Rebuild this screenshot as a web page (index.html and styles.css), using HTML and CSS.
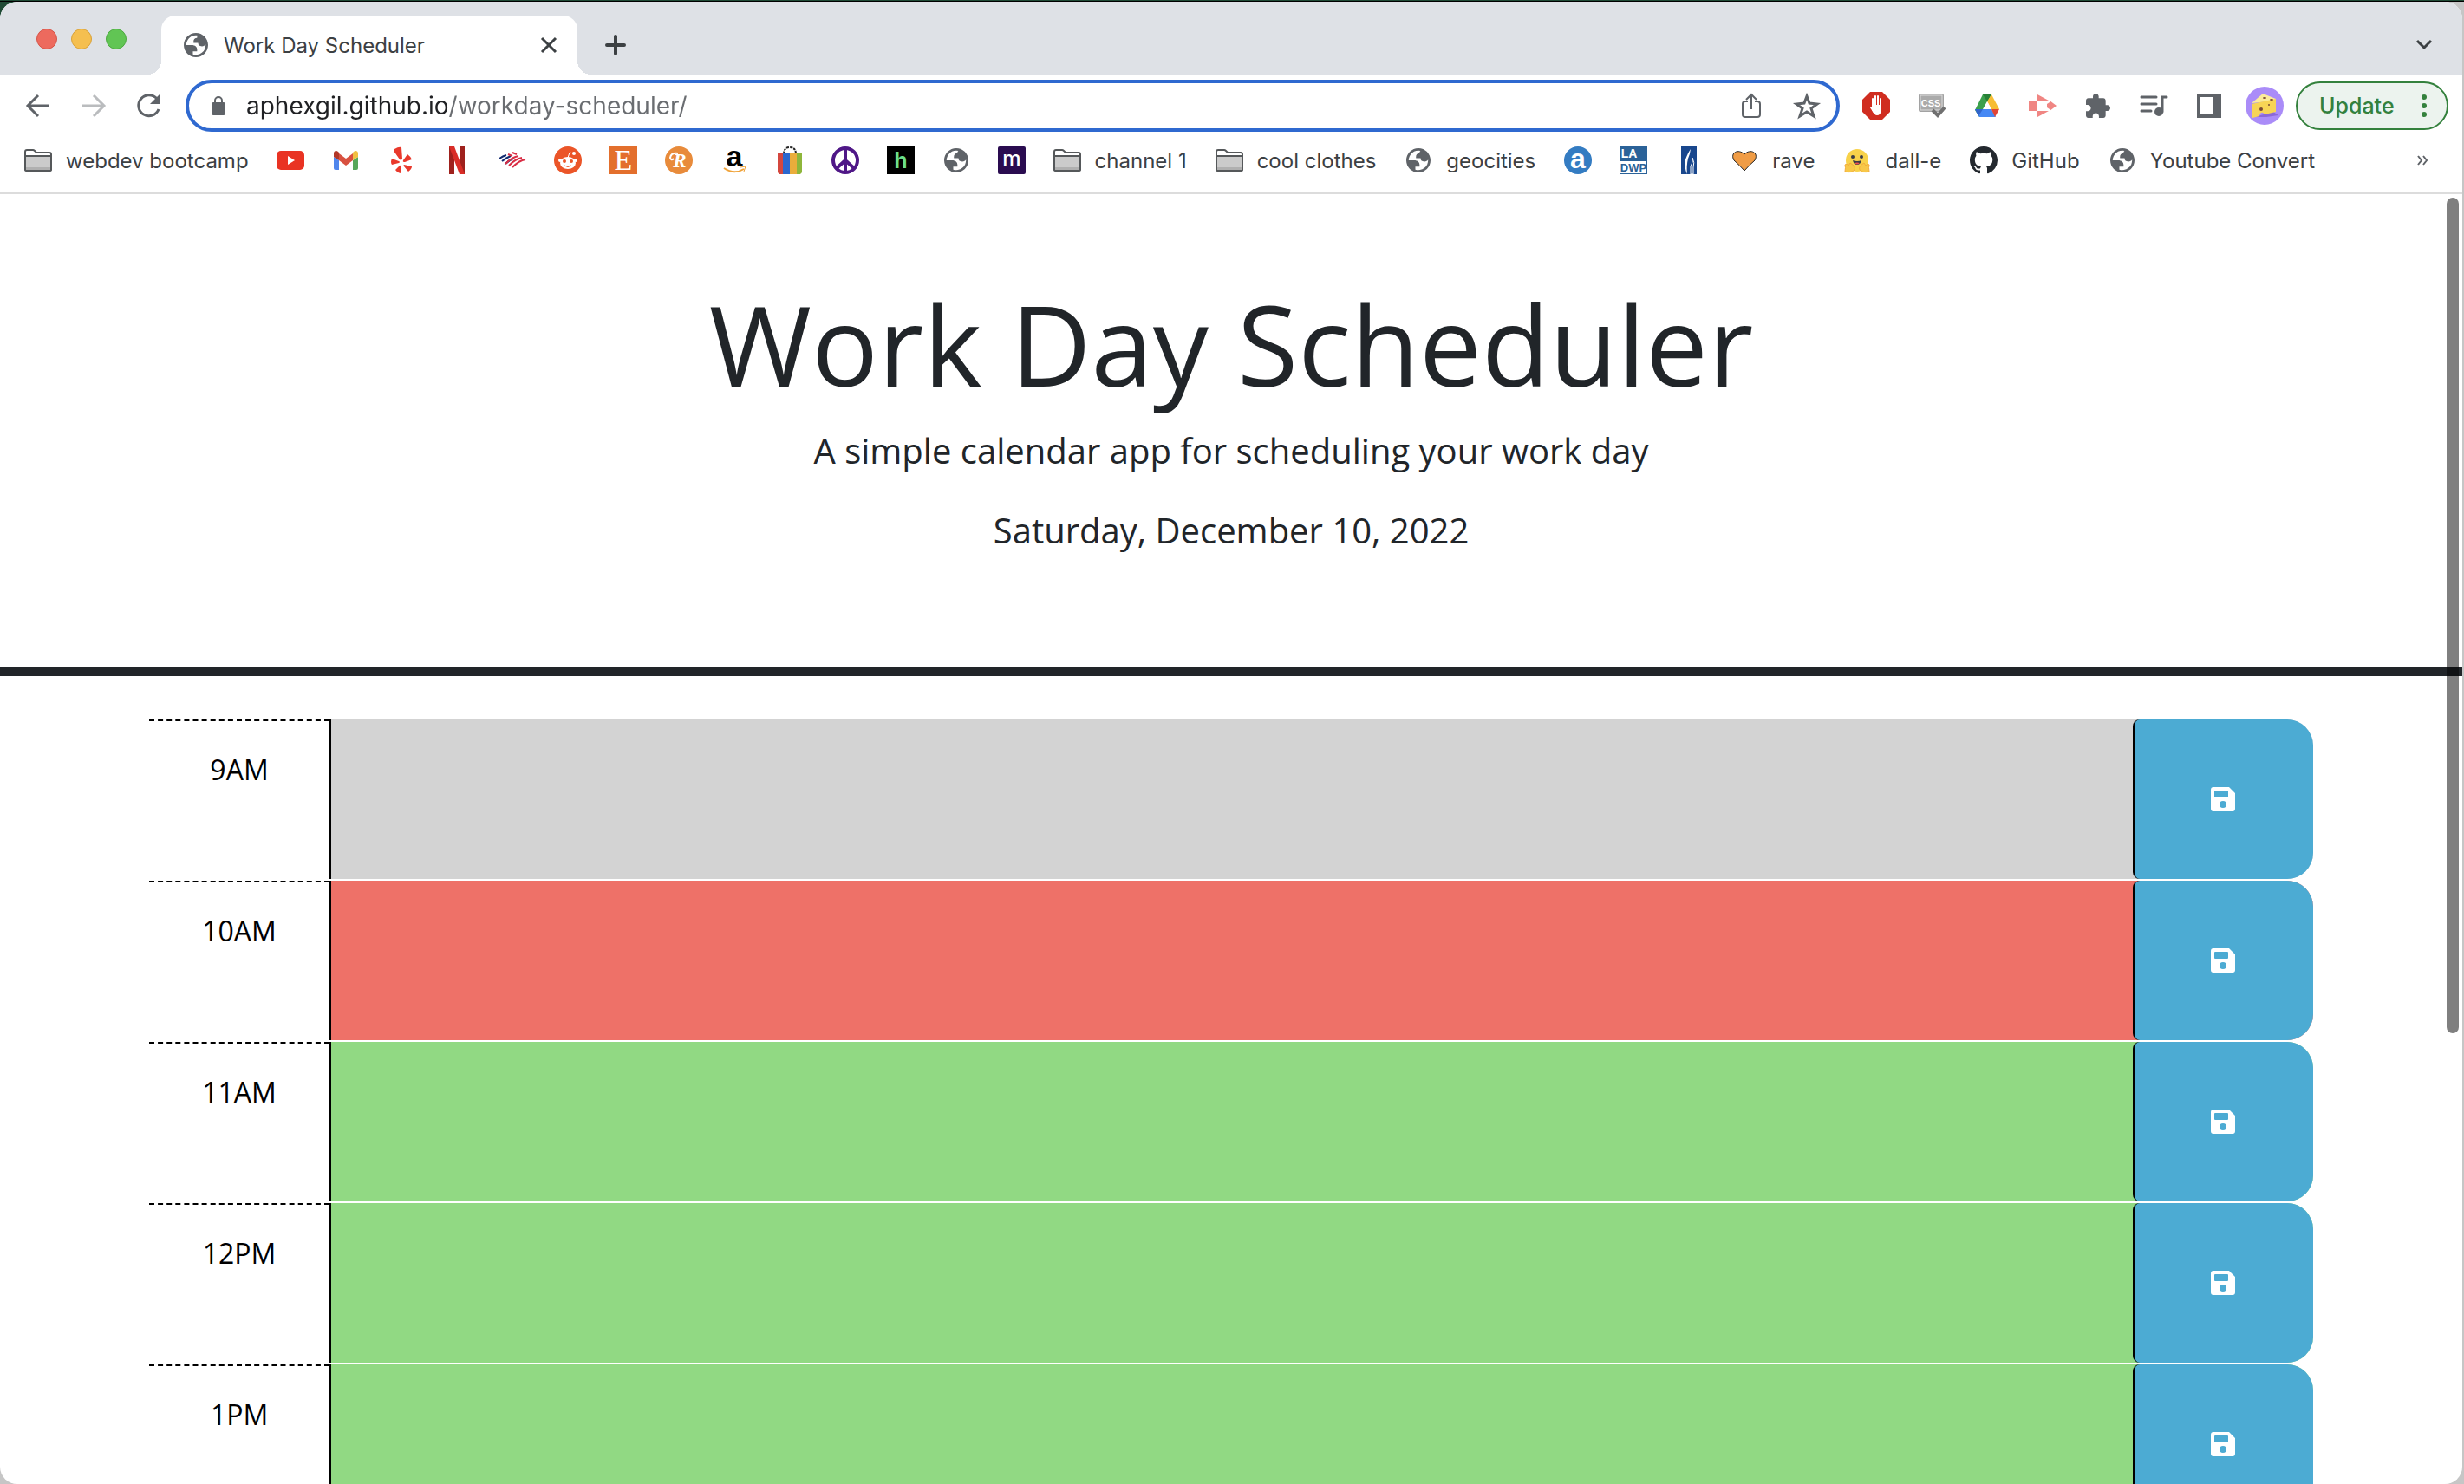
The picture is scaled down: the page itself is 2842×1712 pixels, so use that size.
FILE: index.html
```html
<!DOCTYPE html>
<html lang="en">
<head>
<meta charset="utf-8">
<meta name="viewport" content="width=device-width, initial-scale=1">
<title>Work Day Scheduler</title>
<link rel="stylesheet" href="styles.css">
</head>
<body>
<svg class="sprite" aria-hidden="true">
  <symbol id="globe" viewBox="2 2 20 20"><path fill="#5f6368" fill-rule="evenodd" d="M12 2C6.48 2 2 6.48 2 12s4.48 10 10 10 10-4.48 10-10S17.52 2 12 2zM4 12h4.4c3.407.022 4.922 1.73 4.543 5.127H9.488v2.47a8.004 8.004 0 0 0 10.498-8.083C19.327 12.504 18.332 13 17 13c-2.137 0-3.206-.916-3.206-2.75h-3.748c-.274-2.728.683-4.092 2.87-4.092 0-.975.327-1.597.811-1.97A8.004 8.004 0 0 0 4 12z"/></symbol>
  <symbol id="folder" viewBox="0 0 32 32"><path d="M1 27V6q0-2 2-2h7q1 0 2 1l2 2h15q2 0 2 2v18q0 1-2 1H3q-2 0-2-1z" fill="#fff" stroke="#55585a" stroke-width="2"/><path d="M2 12h28v15H2z" fill="#cbcbcb"/><path d="M2 24h28v3H2z" fill="#b0b0b0"/><path d="M1 11h30" stroke="#55585a" stroke-width="2"/></symbol>
  <symbol id="save" viewBox="0 0 28 28"><path fill="#fff" fill-rule="evenodd" d="M3 0h18l7 7v18q0 3-3 3H3q-3 0-3-3V3q0-3 3-3zM5 4q-1 0-1 1v6q0 1 1 1h14q1 0 1-1V5q0-1-1-1zM14 16a4 4 0 1 0 0 8 4 4 0 0 0 0-8z"/></symbol>
</svg>

<div class="window">
  <header class="tabstrip">
    <div class="lights"><button class="light red" aria-label="Close window"></button><button class="light yellow" aria-label="Minimize"></button><button class="light green" aria-label="Zoom"></button></div>
    <div class="tab">
      <svg class="icon28"><use href="#globe"/></svg>
      <span class="tab-title">Work Day Scheduler</span>
      <button class="plain tab-close" aria-label="Close tab"><svg width="18" height="18" viewBox="0 0 18 18" stroke="#3c4043" stroke-width="3"><path d="M1 1l16 16M17 1L1 17"/></svg></button>
    </div>
    <button class="plain new-tab" aria-label="New tab"><svg width="24" height="24" viewBox="0 0 24 24" stroke="#3c4043" stroke-width="4" stroke-linecap="round"><path d="M12 2v20M2 12h20"/></svg></button>
    <button class="plain tab-menu" aria-label="Search tabs"><svg width="18" height="12" viewBox="0 0 18 12" fill="none" stroke="#3c4043" stroke-width="3"><path d="M1 1l8 8 8-8"/></svg></button>
  </header>

  <nav class="toolbar" aria-label="Navigation">
    <button class="plain tool" aria-label="Back"><svg width="28" height="28" viewBox="0 0 28 28" fill="none" stroke="#5f6368" stroke-width="3"><path d="M27 14H3M14 2L2 14l12 12"/></svg></button>
    <button class="plain tool" aria-label="Forward" disabled><svg width="28" height="28" viewBox="0 0 28 28" fill="none" stroke="#babcbe" stroke-width="3"><path d="M1 14h24M14 2l12 12-12 12"/></svg></button>
    <button class="plain tool" aria-label="Reload"><svg width="28" height="28" viewBox="0 0 28 28"><path d="M23 6A12 12 0 1 0 25 18" fill="none" stroke="#5f6368" stroke-width="3"/><path d="M27 0v12H15z" fill="#5f6368"/></svg></button>
    <form class="omnibox">
      <svg width="18" height="24" viewBox="0 0 18 24"><rect x="1" y="8" width="16" height="15" rx="2" fill="#5f6368"/><path d="M5 9V6a4 4 0 0 1 8 0v3" fill="none" stroke="#5f6368" stroke-width="2"/></svg>
      <input class="address" type="text" aria-label="Address" value="aphexgil.github.io/workday-scheduler/" spellcheck="false">
      <button type="button" class="plain tool" aria-label="Share"><svg width="24" height="30" viewBox="0 0 24 30" fill="none" stroke="#5f6368" stroke-width="2"><path d="M8 10H5q-3 0-3 3v12q0 3 3 3h14q3 0 3-3V13q0-3-3-3h-3M12 19V3M6 8l6-6 6 6"/></svg></button>
      <button type="button" class="plain tool" aria-label="Bookmark"><svg width="28" height="28" viewBox="0 0 28 28" fill="none" stroke="#5f6368" stroke-width="3"><path d="M14 3l3 8 9 1-7 5 3 9-8-5-8 5 3-9-7-5 9-1z"/></svg></button>
    </form>
    <div class="extensions">
      <button class="plain tool" aria-label="Ad blocker"><svg width="32" height="32" viewBox="0 0 32 32"><path d="M9 0h14l9 9v14l-9 9H9l-9-9V9z" fill="#d02d20"/><path d="M12 18V8M15 16V5M18 16V5M21 18V8M14 24l-4-6" stroke="#fff" stroke-width="2" stroke-linecap="round"/><path d="M11 15h11v6q-1 6-5 6-3 0-6-6z" fill="#fff"/></svg></button>
      <button class="plain tool" aria-label="CSS viewer"><svg width="32" height="28" viewBox="0 0 32 28"><rect x="2" y="1" width="27" height="19" rx="1" fill="#aaa" stroke="#a2a2a2" stroke-width="2"/><rect x="3" y="2" width="25" height="17" fill="none" stroke="#ddd"/><text class="mark" x="15" y="15" font-size="11" fill="#fff">CSS</text><path d="M17 19l6 6 8-9" fill="none" stroke="#707070" stroke-width="4"/></svg></button>
      <button class="plain tool" aria-label="Drive"><svg width="30" height="26" viewBox="0 0 30 26"><path d="M10 0h10l-5 9-9 17-5-8z" fill="#3ba04d"/><path d="M10 0h10l-5 8z" fill="#278037"/><path d="M20 0l9 17H20L15 8z" fill="#f7bd35"/><path d="M1 17h19l5 9H6z" fill="#4688f4"/><path d="M20 17h9l-5 9z" fill="#e04537"/><path d="M1 17h9l-5 8z" fill="#3165ca"/><path d="M15 8l5 9H10z" fill="#fff"/></svg></button>
      <button class="plain tool" aria-label="Screen recorder"><svg width="32" height="26" viewBox="0 0 32 26"><path d="M0 7h9v12H0zM10 0l13 7H10zM10 19h13l-13 7zM24 7l8 6-8 6v-2l-3-2v-4l3-2z" fill="#f08683"/></svg></button>
      <button class="plain tool" aria-label="Extensions"><svg width="28" height="28" viewBox="2 1 21 21"><path fill="#5f6368" d="M20.500 11H19V7c0-1.100-.900-2-2-2h-4V3.500C13 2.120 11.880 1 10.500 1S8 2.120 8 3.500V5H4c-1.100 0-1.990.900-1.990 2v3.800H3.500c1.490 0 2.700 1.210 2.700 2.700s-1.210 2.700-2.700 2.700H2V20c0 1.100.900 2 2 2h3.800v-1.500c0-1.490 1.210-2.700 2.700-2.700s2.700 1.210 2.700 2.700V22H17c1.100 0 2-.900 2-2v-4h1.500c1.380 0 2.500-1.120 2.500-2.500S21.880 11 20.500 11z"/></svg></button>
      <button class="plain tool" aria-label="Media"><svg width="32" height="26" viewBox="0 0 32 26" fill="none" stroke="#5f6368" stroke-width="3" stroke-linecap="round"><path d="M2 3h17M2 11h17M2 19h11M31 3h-5v17"/><circle cx="22" cy="20" r="5" fill="#5f6368" stroke="none"/></svg></button>
      <button class="plain tool" aria-label="Side panel"><svg width="28" height="28" viewBox="0 0 28 28"><path fill="#5f6368" fill-rule="evenodd" d="M0 0h28v28H0zM4 4v20h14V4z"/></svg></button>
      <button class="plain tool" aria-label="Profile"><svg width="44" height="44" viewBox="0 0 44 44"><circle cx="22" cy="22" r="22" fill="#aa8cf8"/><path d="M10 35h14l14-2-6-4z" fill="#8b68d8"/><path d="M7 19l13-11 15 6v2z" fill="#fbeb9b"/><path d="M7 20l28-6v15l-13 3q-2-3-4-2t-2 4l-8 2z" fill="#f7d455"/><g fill="#7a4a33"><ellipse cx="22" cy="13" rx="2" ry="1"/><ellipse cx="30" cy="15" rx="2" ry="1"/><circle cx="18" cy="26" r="2"/><circle cx="27" cy="21" r="1"/></g></svg></button>
    </div>
    <button class="update">Update<svg width="6" height="26" viewBox="0 0 6 26" fill="#34813d"><circle cx="3" cy="3" r="3"/><circle cx="3" cy="13" r="3"/><circle cx="3" cy="23" r="3"/></svg></button>
  </nav>

  <nav class="bookmarks" aria-label="Bookmarks">
    <a href="#"><svg class="icon32"><use href="#folder"/></svg>webdev bootcamp</a>
    <a href="#" aria-label="YouTube"><svg class="icon32" viewBox="0 0 32 32"><rect y="5" width="32" height="22" rx="5" fill="#e93323"/><path d="M13 11l8 5-8 5z" fill="#fff"/></svg></a>
    <a href="#" aria-label="Gmail"><svg class="icon32" viewBox="0 0 32 32"><path d="M2 12l6 4v11H4q-2 0-2-2z" fill="#5086ec"/><path d="M24 16l6-4v13q0 2-2 2h-4z" fill="#57a75a"/><path d="M8 8l8 6 8-6v8l-8 6-8-6z" fill="#d85140"/><path d="M2 12V8c0-3 3-4 5-2l1 1v9z" fill="#b23728"/><path d="M30 12V8c0-3-3-4-5-2l-1 1v9z" fill="#f1bf42"/></svg></a>
    <a href="#" aria-label="Yelp"><svg class="icon32" viewBox="0 0 32 32" fill="#e9392c"><path d="M8 3q5-3 8-2l1 13q-1 3-3 1L7 5zM5 14l8 3q2 1 0 2l-8 2q-2-3 0-7zM9 27l5-5q2-1 2 1v8q-4 0-7-4zM19 21l9 2q0 3-4 6l-5-6q-1-2 0-2zM18 16l5-7q3 2 5 6l-8 3q-3 0-2-2z"/></svg></a>
    <a href="#" aria-label="Netflix"><svg class="icon32" viewBox="0 0 32 32"><path d="M7 0h6v32H7zM19 0h6v32h-6z" fill="#9f211d"/><path d="M7 0h6l12 32h-6z" fill="#d92d27"/></svg></a>
    <a href="#" aria-label="Bank of America"><svg class="icon32" viewBox="0 0 32 32"><path d="M1 14q4-3 8-4M4 17q5-4 10-6M8 20q4-4 9-6" fill="none" stroke="#142c71" stroke-width="2"/><path d="M11 9l5 2M16 7l5 2" stroke="#d92e45" stroke-width="2"/><path d="M8 20q8-8 15-9M12 22q8-8 15-9M16 24q8-8 15-9" fill="none" stroke="#d92e45" stroke-width="2"/></svg></a>
    <a href="#" aria-label="Reddit"><svg class="icon32" viewBox="0 0 32 32"><circle cx="16" cy="16" r="16" fill="#eb5528"/><g fill="#fff"><ellipse cx="16" cy="19" rx="9" ry="7"/><circle cx="7" cy="16" r="2"/><circle cx="25" cy="16" r="2"/><circle cx="23" cy="8" r="2"/></g><path d="M16 13l2-6 5 1" fill="none" stroke="#fff"/><circle cx="12" cy="17" r="2" fill="#eb5528"/><circle cx="20" cy="17" r="2" fill="#eb5528"/><path d="M12 22q4 3 8 0" fill="none" stroke="#eb5528" stroke-width="1"/></svg></a>
    <a href="#" aria-label="Etsy"><svg class="icon32" viewBox="0 0 32 32"><path d="M0 0h32v32H0z" fill="#e36f2d"/><text class="mark serif" x="16" y="27" font-size="34" fill="#fff">E</text></svg></a>
    <a href="#" aria-label="Rover"><svg class="icon32" viewBox="0 0 32 32"><circle cx="16" cy="16" r="16" fill="#e88b3b"/><text class="mark script" x="17" y="24" font-size="23" fill="#fff">R</text><path d="M15 8Q7 7 6 13q1 4 4 1" fill="none" stroke="#fff" stroke-width="2"/></svg></a>
    <a href="#" aria-label="Amazon"><svg class="icon32" viewBox="0 0 32 32"><text class="mark" x="16" y="23" font-size="34" fill="#000">a</text><path d="M4 25q12 8 23 1" fill="none" stroke="#f0a33a" stroke-width="2"/><path d="M23 24l6-1-2 6" fill="none" stroke="#f0a33a"/></svg></a>
    <a href="#" aria-label="Shopping"><svg class="icon32" viewBox="0 0 32 32"><path d="M9 9q0-8 7-8t7 8" fill="none" stroke="#222" stroke-width="2" stroke-dasharray="3 1"/><path d="M2 8h6v24H4l-2-2z" fill="#d4473e"/><path d="M8 8h8v24H8z" fill="#2b67ce"/><path d="M16 8h8v24h-8z" fill="#eaad3b"/><path d="M24 8h6v22l-2 2h-4z" fill="#8eb63b"/></svg></a>
    <a href="#" aria-label="Peace"><svg class="icon32" viewBox="0 0 32 32" fill="none" stroke="#4f1787" stroke-width="4"><circle cx="16" cy="16" r="14"/><path d="M16 2v28M16 16L6 25M16 16l10 9"/></svg></a>
    <a href="#" aria-label="Hulu"><svg class="icon32" viewBox="0 0 32 32"><path d="M0 0h32v32H0z" fill="#000"/><text class="mark" x="16" y="25" font-size="25" fill="#6be08c">h</text></svg></a>
    <a href="#" aria-label="Website"><svg class="icon32" viewBox="0 0 32 32"><use href="#globe" x="2" y="2" width="28" height="28"/></svg></a>
    <a href="#" aria-label="Metro"><svg class="icon32" viewBox="0 0 32 32"><rect width="32" height="32" rx="2" fill="#2a0c50"/><text class="mark round" x="16" y="22" font-size="24" fill="#fff">m</text></svg></a>
    <a class="labeled" href="#"><svg class="icon32"><use href="#folder"/></svg>channel 1</a>
    <a class="labeled" href="#"><svg class="icon32"><use href="#folder"/></svg>cool clothes</a>
    <a class="labeled" href="#"><svg class="icon32" viewBox="0 0 32 32"><use href="#globe" x="2" y="2" width="28" height="28"/></svg>geocities</a>
    <a href="#" aria-label="Answers"><svg class="icon32" viewBox="0 0 32 32"><circle cx="16" cy="16" r="16" fill="#347cc2"/><text class="mark" x="16" y="25" font-size="32" fill="#fff">a</text></svg></a>
    <a href="#" aria-label="LADWP"><svg class="icon32" viewBox="0 0 32 32"><path d="M0 0h32v32H0z" fill="#2b6298"/><path d="M1 17h30v14H1z" fill="#fff"/><text class="mark" x="11" y="13" font-size="14" fill="#fff">LA</text><text class="mark" x="16" y="29" font-size="13" fill="#2b6298">DWP</text></svg></a>
    <a href="#" aria-label="Gas company"><svg class="icon32" viewBox="0 0 32 32"><path d="M7 0h18v32H7z" fill="#19478d"/><path d="M18 3q-1 7-3 11-2 8-1 18-4-9-2-17 3-8 6-12z" fill="#fff"/><path d="M20 13q3 6 1 11v8h-3V23q3-5 2-10z" fill="none" stroke="#fff"/></svg></a>
    <a class="labeled" href="#"><svg class="icon32" viewBox="0 0 32 32"><path d="M16 28Q10 21 4 16C-1 7 9 2 16 9c7-7 17-2 12 7q-6 5-12 12z" fill="#f09c45" stroke="#222" stroke-width="1"/></svg>rave</a>
    <a class="labeled" href="#"><svg class="icon32" viewBox="0 0 32 32"><circle cx="16" cy="16" r="13" fill="#f8d24a"/><path d="M2 29q1-5 0-8 2-2 4 1l2-3q7 4 5 8-3 4-11 2zM30 29q-1-5 0-8-2-2-4 1l-2-3q-7 4-5 8 3 4 11 2z" fill="#f8c848" stroke="#f3ad3c"/><circle cx="11" cy="12" r="2" fill="#3a3b45"/><circle cx="21" cy="12" r="2" fill="#3a3b45"/><path d="M11 16q5 2 10 0-1 5-5 5t-5-5z" fill="#3a3b45"/><path d="M13 19q3-1 6 0-3 3-6 0z" fill="#ef4e4e"/></svg>dall-e</a>
    <a class="labeled" href="#"><svg class="icon32" viewBox="0 0 16 16"><path fill="#24292f" d="M8 0C3.580 0 0 3.580 0 8c0 3.540 2.290 6.530 5.470 7.590.400.070.550-.170.550-.380 0-.190-.010-.820-.010-1.490-2.010.370-2.530-.490-2.690-.940-.090-.230-.480-.940-.820-1.130-.280-.150-.680-.520-.010-.530.630-.010 1.080.580 1.230.820.720 1.210 1.870.870 2.330.660.070-.520.280-.870.510-1.070-1.780-.200-3.640-.890-3.640-3.950 0-.870.310-1.590.820-2.150-.080-.200-.360-1.020.080-2.120 0 0 .670-.210 2.200.820.640-.180 1.320-.270 2-.270s1.360.090 2 .270c1.530-1.040 2.200-.820 2.200-.820.440 1.100.160 1.920.080 2.120.510.560.820 1.270.820 2.150 0 3.070-1.870 3.750-3.650 3.950.290.250.540.730.540 1.480 0 1.070-.010 1.930-.010 2.200 0 .210.150.460.550.380A8.013 8.013 0 0 0 16 8c0-4.420-3.580-8-8-8z"/></svg>GitHub</a>
    <a class="labeled" href="#"><svg class="icon32" viewBox="0 0 32 32"><use href="#globe" x="2" y="2" width="28" height="28"/></svg>Youtube Convert</a>
    <button class="plain more" aria-label="More bookmarks"><svg width="12" height="12" viewBox="0 0 12 12" fill="none" stroke="#5f6368" stroke-width="2"><path d="M1 1l4 5-4 5M7 1l4 5-4 5"/></svg></button>
  </nav>

  <div class="viewport">
    <header class="hero">
      <h1>Work Day Scheduler</h1>
      <p>A simple calendar app for scheduling your work day</p>
      <p>Saturday, December 10, 2022</p>
    </header>
    <main class="schedule">
      <div class="row past"><label for="h9">9AM</label><textarea id="h9"></textarea><button aria-label="Save 9AM"><svg class="icon28"><use href="#save"/></svg></button></div>
      <div class="row present"><label for="h10">10AM</label><textarea id="h10"></textarea><button aria-label="Save 10AM"><svg class="icon28"><use href="#save"/></svg></button></div>
      <div class="row future"><label for="h11">11AM</label><textarea id="h11"></textarea><button aria-label="Save 11AM"><svg class="icon28"><use href="#save"/></svg></button></div>
      <div class="row future"><label for="h12">12PM</label><textarea id="h12"></textarea><button aria-label="Save 12PM"><svg class="icon28"><use href="#save"/></svg></button></div>
      <div class="row future"><label for="h13">1PM</label><textarea id="h13"></textarea><button aria-label="Save 1PM"><svg class="icon28"><use href="#save"/></svg></button></div>
    </main>
    <div class="scrollbar"></div>
  </div>
</div>
</body>
</html>
```
FILE: styles.css
```css
* { box-sizing: border-box; }

body {
  margin: 0;
  height: 100vh;
  overflow: hidden;
  padding: 2px 2px 0 0;
  background: linear-gradient(#1f4a35 0 1px, #000 1px 2px, transparent 2px), linear-gradient(90deg, #1f4a35 0 40px, transparent 40px) top / 100% 30px no-repeat, #c6c6c6;
  font-family: Inter, "Liberation Sans", sans-serif;
  font-size: 24px;
  color: #3c4043;
}

button, input, textarea { font: inherit; }
svg { flex: none; display: block; overflow: visible; }
a { color: inherit; text-decoration: none; }

.sprite { position: absolute; width: 0; height: 0; }
.icon28 { width: 28px; height: 28px; }
.icon32 { width: 32px; height: 32px; }

.mark { font-family: "Liberation Sans", sans-serif; font-weight: 700; text-anchor: middle; }
.mark.serif { font-family: "Liberation Serif", serif; font-weight: 400; }
.mark.script { font-family: "Liberation Serif", serif; font-style: italic; }
.mark.round { font-family: Inter, sans-serif; font-weight: 500; }

.plain {
  border: 0;
  padding: 0;
  background: none;
  display: flex;
  align-items: center;
  justify-content: center;
}

.window {
  height: 100%;
  display: flex;
  flex-direction: column;
  overflow: hidden;
  border-radius: 20px;
  background: #fff;
}

/* Tab strip */
.tabstrip {
  display: flex;
  height: 84px;
  padding: 16px 35px 0 42px;
  background: #dee1e6;
}
.lights { display: flex; gap: 16px; margin: 15px 40px 0 0; }
.light { width: 24px; height: 24px; padding: 0; border: 1px solid; border-radius: 50%; }
.red { background: #ed6a5e; border-color: #d55549; }
.yellow { background: #f5bf4f; border-color: #d8a13a; }
.green { background: #61c554; border-color: #4da940; }
.tab {
  position: relative;
  display: flex;
  align-items: center;
  gap: 18px;
  width: 480px;
  padding: 0 24px 0 26px;
  border-radius: 16px 16px 0 0;
  background: #fff;
}
.tab::before, .tab::after {
  content: "";
  position: absolute;
  bottom: 0;
  width: 16px;
  height: 16px;
}
.tab::before { right: 100%; background: radial-gradient(circle at 0 0, transparent 16px, #fff 16px); }
.tab::after { left: 100%; background: radial-gradient(circle at 100% 0, transparent 16px, #fff 16px); }
.tab-title { flex: 1; white-space: nowrap; }
.new-tab { margin-left: 32px; }
.tab-menu { margin-left: auto; }

/* Toolbar */
.toolbar { display: flex; align-items: center; height: 72px; padding: 0 16px 0 12px; }
.tool { width: 64px; height: 56px; }
.omnibox {
  flex: 1;
  display: flex;
  align-items: center;
  height: 60px;
  margin: 0 10px;
  padding: 0 2px 0 25px;
  border: 4px solid #2f69d0;
  border-radius: 30px;
}
.address {
  flex: 1;
  margin-left: 23px;
  padding: 0;
  border: 0;
  outline: 0;
  font-size: 28px;
  color: transparent;
  background: linear-gradient(90deg, #202124 233px, #6a6d71 233px);
  background-clip: text;
}
.extensions { display: flex; }
.update {
  display: flex;
  align-items: center;
  justify-content: space-between;
  width: 176px;
  height: 56px;
  margin-left: 4px;
  padding: 0 23px 0 25px;
  border: 2px solid #34813d;
  border-radius: 28px;
  background: #ecf3ee;
  color: #34813d;
  font-size: 25px;
  font-weight: 500;
}

/* Bookmarks */
.bookmarks {
  display: flex;
  align-items: center;
  height: 66px;
  padding: 0 40px 10px 12px;
  border-bottom: 2px solid #dcdcdc;
  white-space: nowrap;
}
.bookmarks a { display: flex; align-items: center; gap: 16px; padding: 0 16px; }
.bookmarks .labeled { padding-right: 17px; }
.more { margin-left: auto; }

/* Page */
.viewport {
  position: relative;
  flex: 1;
  min-height: 0;
  overflow: hidden;
  font-family: "Open Sans", sans-serif;
}
.hero {
  padding: 96px;
  border-bottom: 10px solid #212529;
  text-align: center;
  color: #212529;
}
.hero h1 { margin: 0 0 16px; font-size: 128px; font-weight: 400; line-height: 154px; }
.hero p { margin: 0 0 32px; font-size: 40px; line-height: 60px; }
.schedule { display: grid; gap: 2px; padding: 50px 172px 0; }
.row {
  display: grid;
  grid-template-columns: 1fr 10fr 1fr;
  height: 184px;
  border-radius: 0 30px 30px 0;
}
.past { background: #d3d3d3; }
.present { background: #ee7168; }
.future { background: #91d983; }
.row label {
  padding-top: 32px;
  border-top: 2px dashed #000;
  background: #fff;
  color: #000;
  font-size: 32px;
  line-height: 48px;
  text-align: center;
}
.row textarea {
  width: 100%;
  padding: 12px;
  border: 0;
  border-left: 2px solid #000;
  background: transparent;
  resize: none;
}
.row button {
  display: flex;
  align-items: center;
  justify-content: center;
  padding: 0 2px 0 0;
  border: 0;
  border-left: 2px solid #000;
  border-radius: 8px 30px 30px 8px;
  background: #4cabd3;
}
.scrollbar {
  position: absolute;
  top: 4px;
  right: 4px;
  width: 14px;
  height: 64.8%;
  border-radius: 7px;
  background: rgba(0, 0, 0, .5);
}
```
